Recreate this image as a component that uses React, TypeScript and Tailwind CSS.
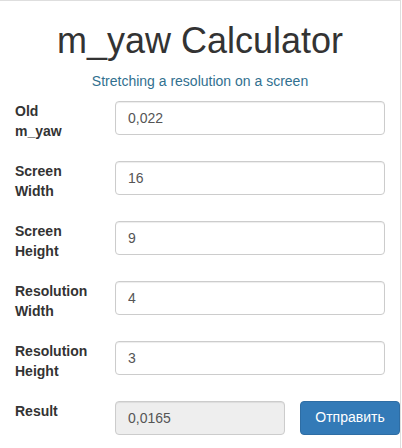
import React from "react";

const fields = [
  { label: "Old m_yaw", value: "0,022" },
  { label: "Screen Width", value: "16" },
  { label: "Screen Height", value: "9" },
  { label: "Resolution Width", value: "4" },
  { label: "Resolution Height", value: "3" },
];

export default function App() {
  return (
    <div className="w-[401px] h-[448px] bg-white border-t border-r border-[#dedede] font-['Liberation_Sans',Arial,sans-serif] text-[#333]">
      {/* Header */}
      <h1 className="pt-[20px] text-center text-[36px] leading-[39.6px] font-normal">m_yaw Calculator</h1>
      <p className="mt-[10px] text-center text-[14px] leading-[20px] text-[#31708f]">
        Stretching a resolution on a screen
      </p>

      {/* Form */}
      <div className="mt-[10px]">
        {fields.map((f) => (
          <div key={f.label} className="flex items-start h-[60px]">
            <label className="w-[100px] pl-[15px] pr-[15px] text-[14px] leading-[20px] font-bold">
              {f.label}
            </label>
            <div className="w-[300px] px-[15px]">
              <input
                readOnly
                value={f.value}
                className="w-full h-[34px] px-[12px] text-[14px] text-[#555] bg-white border border-[#ccc] rounded-[4px] shadow-[inset_0_1px_1px_rgba(0,0,0,0.075)] outline-none"
              />
            </div>
          </div>
        ))}

        <div className="flex items-start">
          <label className="w-[100px] pl-[15px] pr-[15px] text-[14px] leading-[20px] font-bold">Result</label>
          <div className="w-[200px] px-[15px]">
            <input
              readOnly
              value="0,0165"
              className="w-full h-[34px] px-[12px] text-[14px] text-[#555] bg-[#eee] border border-[#ccc] rounded-[4px] shadow-[inset_0_1px_1px_rgba(0,0,0,0.075)] outline-none"
            />
          </div>
          <button className="w-[100px] h-[34px] text-[14px] text-white bg-[#337ab7] border border-[#2e6da4] rounded-[4px]">
            Отправить
          </button>
        </div>
      </div>
    </div>
  );
}
